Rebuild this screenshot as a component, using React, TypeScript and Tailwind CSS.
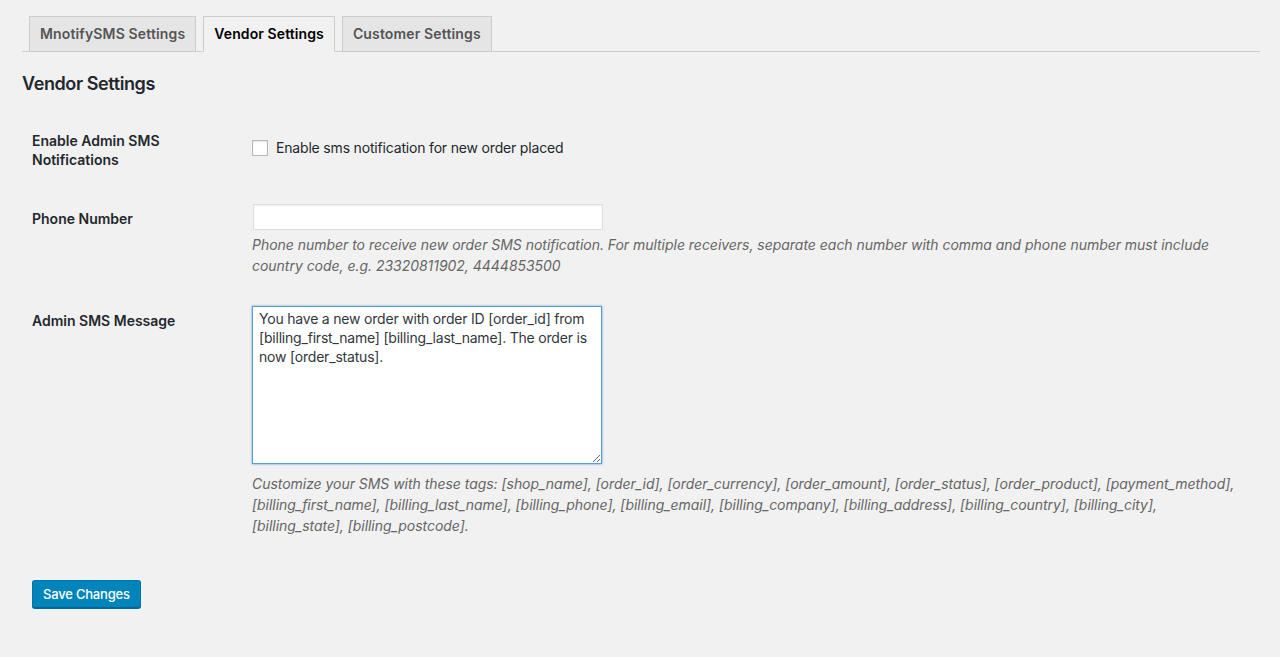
import { useState } from "react";

const tabs = ["MnotifySMS Settings", "Vendor Settings", "Customer Settings"];

const phoneHelp = [
  "Phone number to receive new order SMS notification. For multiple receivers, separate each number with comma and phone number must include",
  "country code, e.g. 23320811902, 4444853500",
];

const smsTags = [
  "Customize your SMS with these tags: [shop_name], [order_id], [order_currency], [order_amount], [order_status], [order_product], [payment_method],",
  "[billing_first_name], [billing_last_name], [billing_phone], [billing_email], [billing_company], [billing_address], [billing_country], [billing_city],",
  "[billing_state], [billing_postcode].",
];

function HelpText({ lines, className }: { lines: string[]; className: string }) {
  return (
    <p className={className}>
      {lines.map((line) => (
        <span key={line} className="block whitespace-nowrap">
          {line}
        </span>
      ))}
    </p>
  );
}

export default function App() {
  const [active, setActive] = useState("Vendor Settings");
  const [enabled, setEnabled] = useState(false);
  const [phone, setPhone] = useState("");
  const [message, setMessage] = useState(
    "You have a new order with order ID [order_id] from [billing_first_name] [billing_last_name]. The order is now [order_status]."
  );

  return (
    <div className="min-h-screen bg-[#f1f1f1] pl-[22px] pr-[20px] pt-[16px] font-['Inter',sans-serif] text-[14px] text-[#23282d]">
      <nav className="flex gap-[7px] border-b border-[#ccc] pl-[7px]">
        {tabs.map((tab) => {
          const isActive = tab === active;
          return (
            <button
              key={tab}
              type="button"
              onClick={() => setActive(tab)}
              className={
                isActive
                  ? "-mb-px border border-[#ccc] border-b-[#f1f1f1] bg-[#f1f1f1] px-[10px] py-[5px] text-[14px] font-semibold leading-[24px] tracking-[0.1px] text-black"
                  : "-mb-px border border-[#ccc] bg-[#e5e5e5] px-[10px] py-[5px] text-[14px] font-semibold leading-[24px] tracking-[0.15px] text-[#555]"
              }
            >
              {tab}
            </button>
          );
        })}
      </nav>

      <h2 className="mt-[20px] text-[18px] font-semibold leading-[23px] tracking-[-0.4px] text-[#23282d]">Vendor Settings</h2>

      <form className="pl-[10px]" onSubmit={(e) => e.preventDefault()}>
        <div className="flex items-start pb-[20px]">
          <div className="w-[220px] shrink-0 pt-[36px] font-semibold leading-[19px]">
            Enable Admin SMS
            <br />
            Notifications
          </div>
          <label className="flex items-center gap-[8px] pt-[43px] leading-[20px] tracking-[-0.18px]">
            <input
              type="checkbox"
              checked={enabled}
              onChange={(e) => setEnabled(e.target.checked)}
              className="h-[16px] w-[16px] appearance-none border border-[#b4b9be] bg-white shadow-[inset_0_1px_2px_rgba(0,0,0,0.1)]"
            />
            Enable sms notification for new order placed
          </label>
        </div>

        <div className="flex items-start pb-[15px]">
          <div className="w-[220px] shrink-0 pt-[20px] font-semibold leading-[19px]">Phone Number</div>
          <div className="flex-1 pt-[15px]">
            <input
              type="text"
              value={phone}
              onChange={(e) => setPhone(e.target.value)}
              className="ml-px block h-[26px] w-[350px] border border-[#ddd] bg-white px-[6px] shadow-[inset_0_1px_2px_rgba(0,0,0,0.07)] outline-none"
            />
            <HelpText lines={phoneHelp} className="mt-[4px] italic leading-[21px] tracking-[-0.03px] text-[#666]" />
          </div>
        </div>

        <div className="flex items-start">
          <div className="w-[220px] shrink-0 pt-[20px] font-semibold leading-[19px]">Admin SMS Message</div>
          <div className="flex-1 pt-[15px]">
            <textarea
              value={message}
              onChange={(e) => setMessage(e.target.value)}
              className="block h-[158px] w-[350px] resize border border-[#5b9dd9] bg-white px-[6px] py-[2px] leading-[19px] tracking-[-0.2px] text-[#32373c] shadow-[0_0_2px_rgba(30,140,190,0.8)] outline-none"
            />
            <HelpText lines={smsTags} className="mt-[9px] italic leading-[21px] tracking-[-0.04px] text-[#666]" />
          </div>
        </div>

        <button
          type="submit"
          className="mt-[44px] h-[28px] rounded-[3px] border border-[#0073aa] border-b-[#006799] bg-[#0085ba] px-[10px] text-[13px] font-medium leading-[26px] tracking-[-0.2px] text-white shadow-[0_1px_0_#006799]"
        >
          Save Changes
        </button>
      </form>
    </div>
  );
}
